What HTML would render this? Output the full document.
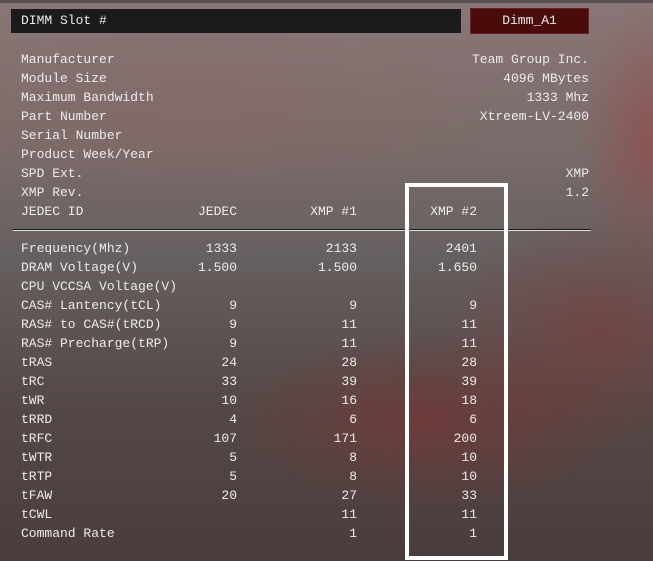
<!DOCTYPE html>
<html><head><meta charset="utf-8"><style>
body{margin:0;width:653px;height:561px;overflow:hidden;position:relative;font-family:"Liberation Mono",monospace;font-size:13px;color:#ececec;
background:
radial-gradient(ellipse 200px 90px at 430px 420px,rgba(130,50,50,.55),rgba(130,50,50,0)),
radial-gradient(ellipse 160px 120px at 600px 330px,rgba(130,55,55,.5),rgba(130,55,55,0)),
radial-gradient(ellipse 70px 140px at 650px 140px,rgba(150,70,70,.6),rgba(150,70,70,0)),
radial-gradient(ellipse 300px 100px at 200px 120px,rgba(140,100,100,.35),rgba(140,100,100,0)),
linear-gradient(180deg,#8a7676 0%,#7a6c6a 25%,#676060 45%,#554a48 70%,#4a3c3b 100%);}
.top{position:absolute;left:0;top:0;width:653px;height:3px;background:#5a5050}
.bx{position:absolute;top:9px;height:24px;line-height:24px}
.r{position:absolute;height:19px;line-height:19px;white-space:pre}
.l{left:21px}
.a{right:calc(653px - 237px);text-align:right}
.b{right:calc(653px - 357px);text-align:right}
.c{right:calc(653px - 477px);text-align:right}
.d{right:calc(653px - 589px);text-align:right}
</style></head><body>
<div class="top"></div>
<div class="bx" style="left:11px;width:450px;background:#1b1b1b;padding-left:10px;box-sizing:border-box">DIMM Slot #</div>
<div class="bx" style="left:471px;width:117px;background:#4a0b0b;text-align:center;box-shadow:0 0 0 1px #6a2020">Dimm_A1</div>
<div style="position:absolute;left:13px;top:229px;width:578px;height:1px;background:#e0e0e0;border-top:1px solid #1a1a1a"></div>
<div style="position:absolute;left:405px;top:183px;width:95px;height:369px;border:4px solid #fff"></div>
<div id="rows"></div>
<script></script>
<div class="r l" style="top:50px">Manufacturer</div><div class="r d" style="top:50px">Team Group Inc.</div>
<div class="r l" style="top:69px">Module Size</div><div class="r d" style="top:69px">4096 MBytes</div>
<div class="r l" style="top:88px">Maximum Bandwidth</div><div class="r d" style="top:88px">1333 Mhz</div>
<div class="r l" style="top:107px">Part Number</div><div class="r d" style="top:107px">Xtreem-LV-2400</div>
<div class="r l" style="top:126px">Serial Number</div>
<div class="r l" style="top:145px">Product Week/Year</div>
<div class="r l" style="top:164px">SPD Ext.</div><div class="r d" style="top:164px">XMP</div>
<div class="r l" style="top:183px">XMP Rev.</div><div class="r d" style="top:183px">1.2</div>
<div class="r l" style="top:202px">JEDEC ID</div><div class="r a" style="top:202px">JEDEC</div><div class="r b" style="top:202px">XMP #1</div><div class="r c" style="top:202px">XMP #2</div>
<div class="r l" style="top:239px">Frequency(Mhz)</div><div class="r a" style="top:239px">1333</div><div class="r b" style="top:239px">2133</div><div class="r c" style="top:239px">2401</div>
<div class="r l" style="top:258px">DRAM Voltage(V)</div><div class="r a" style="top:258px">1.500</div><div class="r b" style="top:258px">1.500</div><div class="r c" style="top:258px">1.650</div>
<div class="r l" style="top:277px">CPU VCCSA Voltage(V)</div>
<div class="r l" style="top:296px">CAS# Lantency(tCL)</div><div class="r a" style="top:296px">9</div><div class="r b" style="top:296px">9</div><div class="r c" style="top:296px">9</div>
<div class="r l" style="top:315px">RAS# to CAS#(tRCD)</div><div class="r a" style="top:315px">9</div><div class="r b" style="top:315px">11</div><div class="r c" style="top:315px">11</div>
<div class="r l" style="top:334px">RAS# Precharge(tRP)</div><div class="r a" style="top:334px">9</div><div class="r b" style="top:334px">11</div><div class="r c" style="top:334px">11</div>
<div class="r l" style="top:353px">tRAS</div><div class="r a" style="top:353px">24</div><div class="r b" style="top:353px">28</div><div class="r c" style="top:353px">28</div>
<div class="r l" style="top:372px">tRC</div><div class="r a" style="top:372px">33</div><div class="r b" style="top:372px">39</div><div class="r c" style="top:372px">39</div>
<div class="r l" style="top:391px">tWR</div><div class="r a" style="top:391px">10</div><div class="r b" style="top:391px">16</div><div class="r c" style="top:391px">18</div>
<div class="r l" style="top:410px">tRRD</div><div class="r a" style="top:410px">4</div><div class="r b" style="top:410px">6</div><div class="r c" style="top:410px">6</div>
<div class="r l" style="top:429px">tRFC</div><div class="r a" style="top:429px">107</div><div class="r b" style="top:429px">171</div><div class="r c" style="top:429px">200</div>
<div class="r l" style="top:448px">tWTR</div><div class="r a" style="top:448px">5</div><div class="r b" style="top:448px">8</div><div class="r c" style="top:448px">10</div>
<div class="r l" style="top:467px">tRTP</div><div class="r a" style="top:467px">5</div><div class="r b" style="top:467px">8</div><div class="r c" style="top:467px">10</div>
<div class="r l" style="top:486px">tFAW</div><div class="r a" style="top:486px">20</div><div class="r b" style="top:486px">27</div><div class="r c" style="top:486px">33</div>
<div class="r l" style="top:505px">tCWL</div><div class="r b" style="top:505px">11</div><div class="r c" style="top:505px">11</div>
<div class="r l" style="top:524px">Command Rate</div><div class="r b" style="top:524px">1</div><div class="r c" style="top:524px">1</div>
</body></html>
